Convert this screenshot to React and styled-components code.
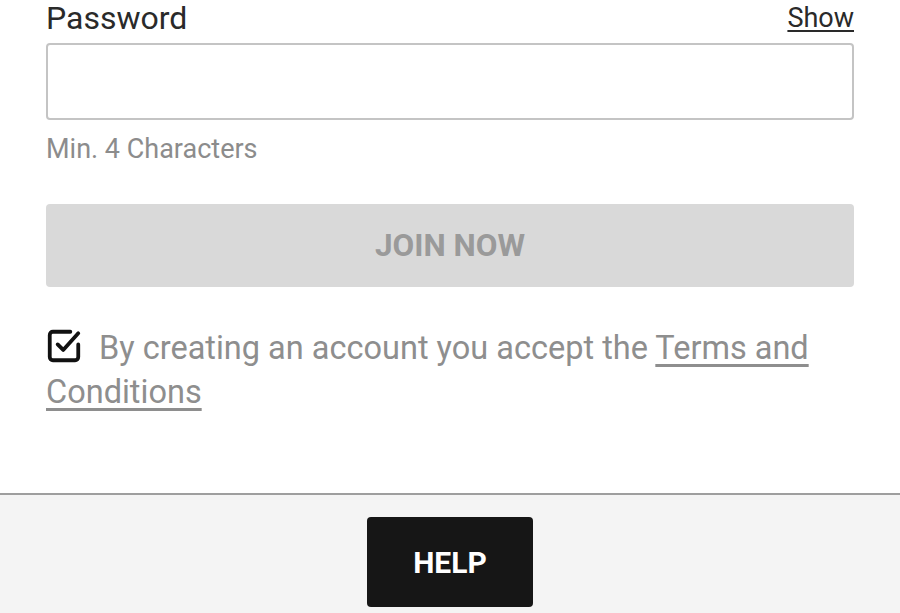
import React, { useState } from "react";
import styled, { createGlobalStyle } from "styled-components";

const GlobalStyle = createGlobalStyle`
    html, body {
        margin: 0;
        padding: 0;
        background: #ffffff;
        font-family: Roboto, "Liberation Sans", Arial, sans-serif;
    }
`;

const Page = styled.div`
    display: flex;
    flex-direction: column;
    min-height: 100vh;
`;
const Form = styled.div`
    display: flex;
    flex-direction: column;
    padding: 0 46px 79px;
`;
const LabelRow = styled.div`
    display: flex;
    justify-content: space-between;
    align-items: flex-end;
    height: 36px;
`;
const Label = styled.label`
    font-size: 32px;
    line-height: 38px;
    margin-bottom: -1px;
    color: #2a2a2a;
`;
const ShowLink = styled.span`
    font-size: 27px;
    line-height: 30px;
    margin-bottom: 3px;
    color: #2a2a2a;
    text-decoration: underline;
    text-underline-offset: 3px;
    cursor: pointer;
`;
const Input = styled.input`
    box-sizing: border-box;
    margin-top: 7px;
    width: 100%;
    height: 77px;
    border: 2px solid #c4c4c4;
    border-radius: 4px;
    background: #fff;
    font-size: 26px;
    padding: 0 16px;
    outline: none;
`;
const Hint = styled.div`
    margin-top: 13px;
    font-size: 27px;
    line-height: 32px;
    color: #8c8c8c;
`;
const JoinButton = styled.button`
    margin-top: 39px;
    height: 83px;
    border: none;
    border-radius: 4px;
    background: #d9d9d9;
    color: #9a9a9a;
    font-family: Roboto, "Liberation Sans", Arial, sans-serif;
    font-weight: 700;
    font-size: 31.5px;
`;
const Terms = styled.p`
    margin: 39px 0 0;
    font-size: 32.5px;
    line-height: 44px;
    color: #8e8e8e;
`;
const CheckIcon = styled.svg`
    width: 38px;
    height: 38px;
    vertical-align: -6px;
    margin-right: 16px;
    margin-left: -1px;
`;
const TermsLink = styled.a`
    color: #8e8e8e;
    text-decoration: underline;
    text-underline-offset: 5px;
`;
const Footer = styled.footer`
    flex: 1;
    display: flex;
    justify-content: center;
    align-items: flex-start;
    padding-top: 22px;
    border-top: 2px solid #9e9e9e;
    background: #f4f4f4;
`;
const HelpButton = styled.button`
    width: 166px;
    height: 90px;
    border: none;
    border-radius: 4px;
    background: #161616;
    color: #fff;
    font-family: Roboto, "Liberation Sans", Arial, sans-serif;
    font-weight: 700;
    font-size: 30px;
`;

const App = () => {
    const [show, setShow] = useState(false);

    return (
        <Page>
            <GlobalStyle />
            <Form>
                <LabelRow>
                    <Label>Password</Label>
                    <ShowLink onClick={() => setShow(!show)}>Show</ShowLink>
                </LabelRow>
                <Input type={show ? "text" : "password"} />
                <Hint>Min. 4 Characters</Hint>
                <JoinButton disabled>JOIN NOW</JoinButton>
                <Terms>
                    <CheckIcon viewBox="0 0 24 24" fill="none" stroke="#111" strokeWidth="2.4" strokeLinecap="round" strokeLinejoin="round">
                        <path d="M21 11v8a2 2 0 0 1-2 2H5a2 2 0 0 1-2-2V5a2 2 0 0 1 2-2h11" />
                        <path d="m8 11 3.5 3.5L21 4" />
                    </CheckIcon>
                    By creating an account you accept the <TermsLink>Terms and Conditions</TermsLink>
                </Terms>
            </Form>
            <Footer>
                <HelpButton>HELP</HelpButton>
            </Footer>
        </Page>
    );
};

export default App;
